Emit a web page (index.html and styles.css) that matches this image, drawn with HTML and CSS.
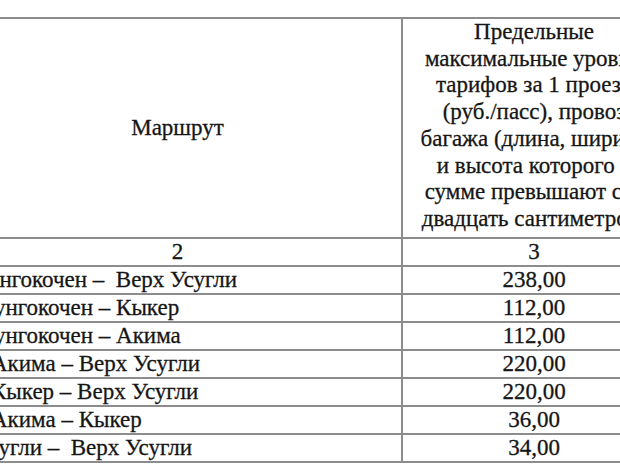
FILE: index.html
```html
<!DOCTYPE html>
<html lang="ru">
<head>
<meta charset="utf-8">
<link rel="stylesheet" href="styles.css">
</head>
<body>
<div class="page">
  <table class="tariffs">
    <tr class="head">
      <td class="route-col">Маршрут</td>
      <td class="price-col">Предельные<br>максимальные уровни<br>тарифов за 1 проезд<br>(руб./пасс), провоз<br>багажа (длина, ширина<br>и высота которого в<br>сумме превышают сто<br>двадцать сантиметров)</td>
    </tr>
    <tr class="num">
      <td class="route-col">2</td>
      <td class="price-col">3</td>
    </tr>
    <tr class="row"><td class="route r-a">Тунгокочен –&nbsp; Верх Усугли</td><td class="price">238,00</td></tr>
    <tr class="row"><td class="route r-b">Тунгокочен – Кыкер</td><td class="price">112,00</td></tr>
    <tr class="row"><td class="route r-b">Тунгокочен – Акима</td><td class="price">112,00</td></tr>
    <tr class="row"><td class="route r-c">Акима – Верх Усугли</td><td class="price">220,00</td></tr>
    <tr class="row"><td class="route r-c">Кыкер – Верх Усугли</td><td class="price">220,00</td></tr>
    <tr class="row"><td class="route r-c">Акима – Кыкер</td><td class="price">36,00</td></tr>
    <tr class="row"><td class="route r-a">Усугли –&nbsp; Верх Усугли</td><td class="price">34,00</td></tr>
  </table>
</div>
</body>
</html>
```
FILE: styles.css
```css
html, body {
  margin: 0;
  padding: 0;
  background: #ffffff;
  overflow: hidden;
  font-family: "Liberation Serif", "Times New Roman", serif;
}
.page {
  width: 620px;
  height: 465px;
  overflow: hidden;
  padding-top: 17px;
  box-sizing: border-box;
}
.tariffs {
  margin-left: -46px;
  border-collapse: collapse;
  table-layout: fixed;
  width: 709px;
}
.tariffs td {
  font-family: "Liberation Serif", "Times New Roman", serif;
  font-size: 23px;
  color: #151515;
  -webkit-text-stroke: 0.3px #1a1a1a;
  border-top: 2px solid #8c8c8c;
  border-bottom: 2px solid #8c8c8c;
  padding: 0;
  white-space: nowrap;
  overflow: hidden;
}
.route-col, .route {
  width: 447px;
  border-right: 2px solid #8c8c8c;
}
.price-col, .price {
  width: 262px;
  text-align: center;
}
.head td {
  height: 218px;
  line-height: 26.7px;
  vertical-align: top;
}
.head .route-col {
  text-align: center;
  vertical-align: middle;
}
.num td, .row td {
  height: 26px;
  line-height: 26px;
}
.num .route-col {
  text-align: center;
}
.route {
  text-align: left;
}
.r-a { text-indent: 21px; }
.r-b { text-indent: 27px; }
.r-c { text-indent: 37px; }
```
